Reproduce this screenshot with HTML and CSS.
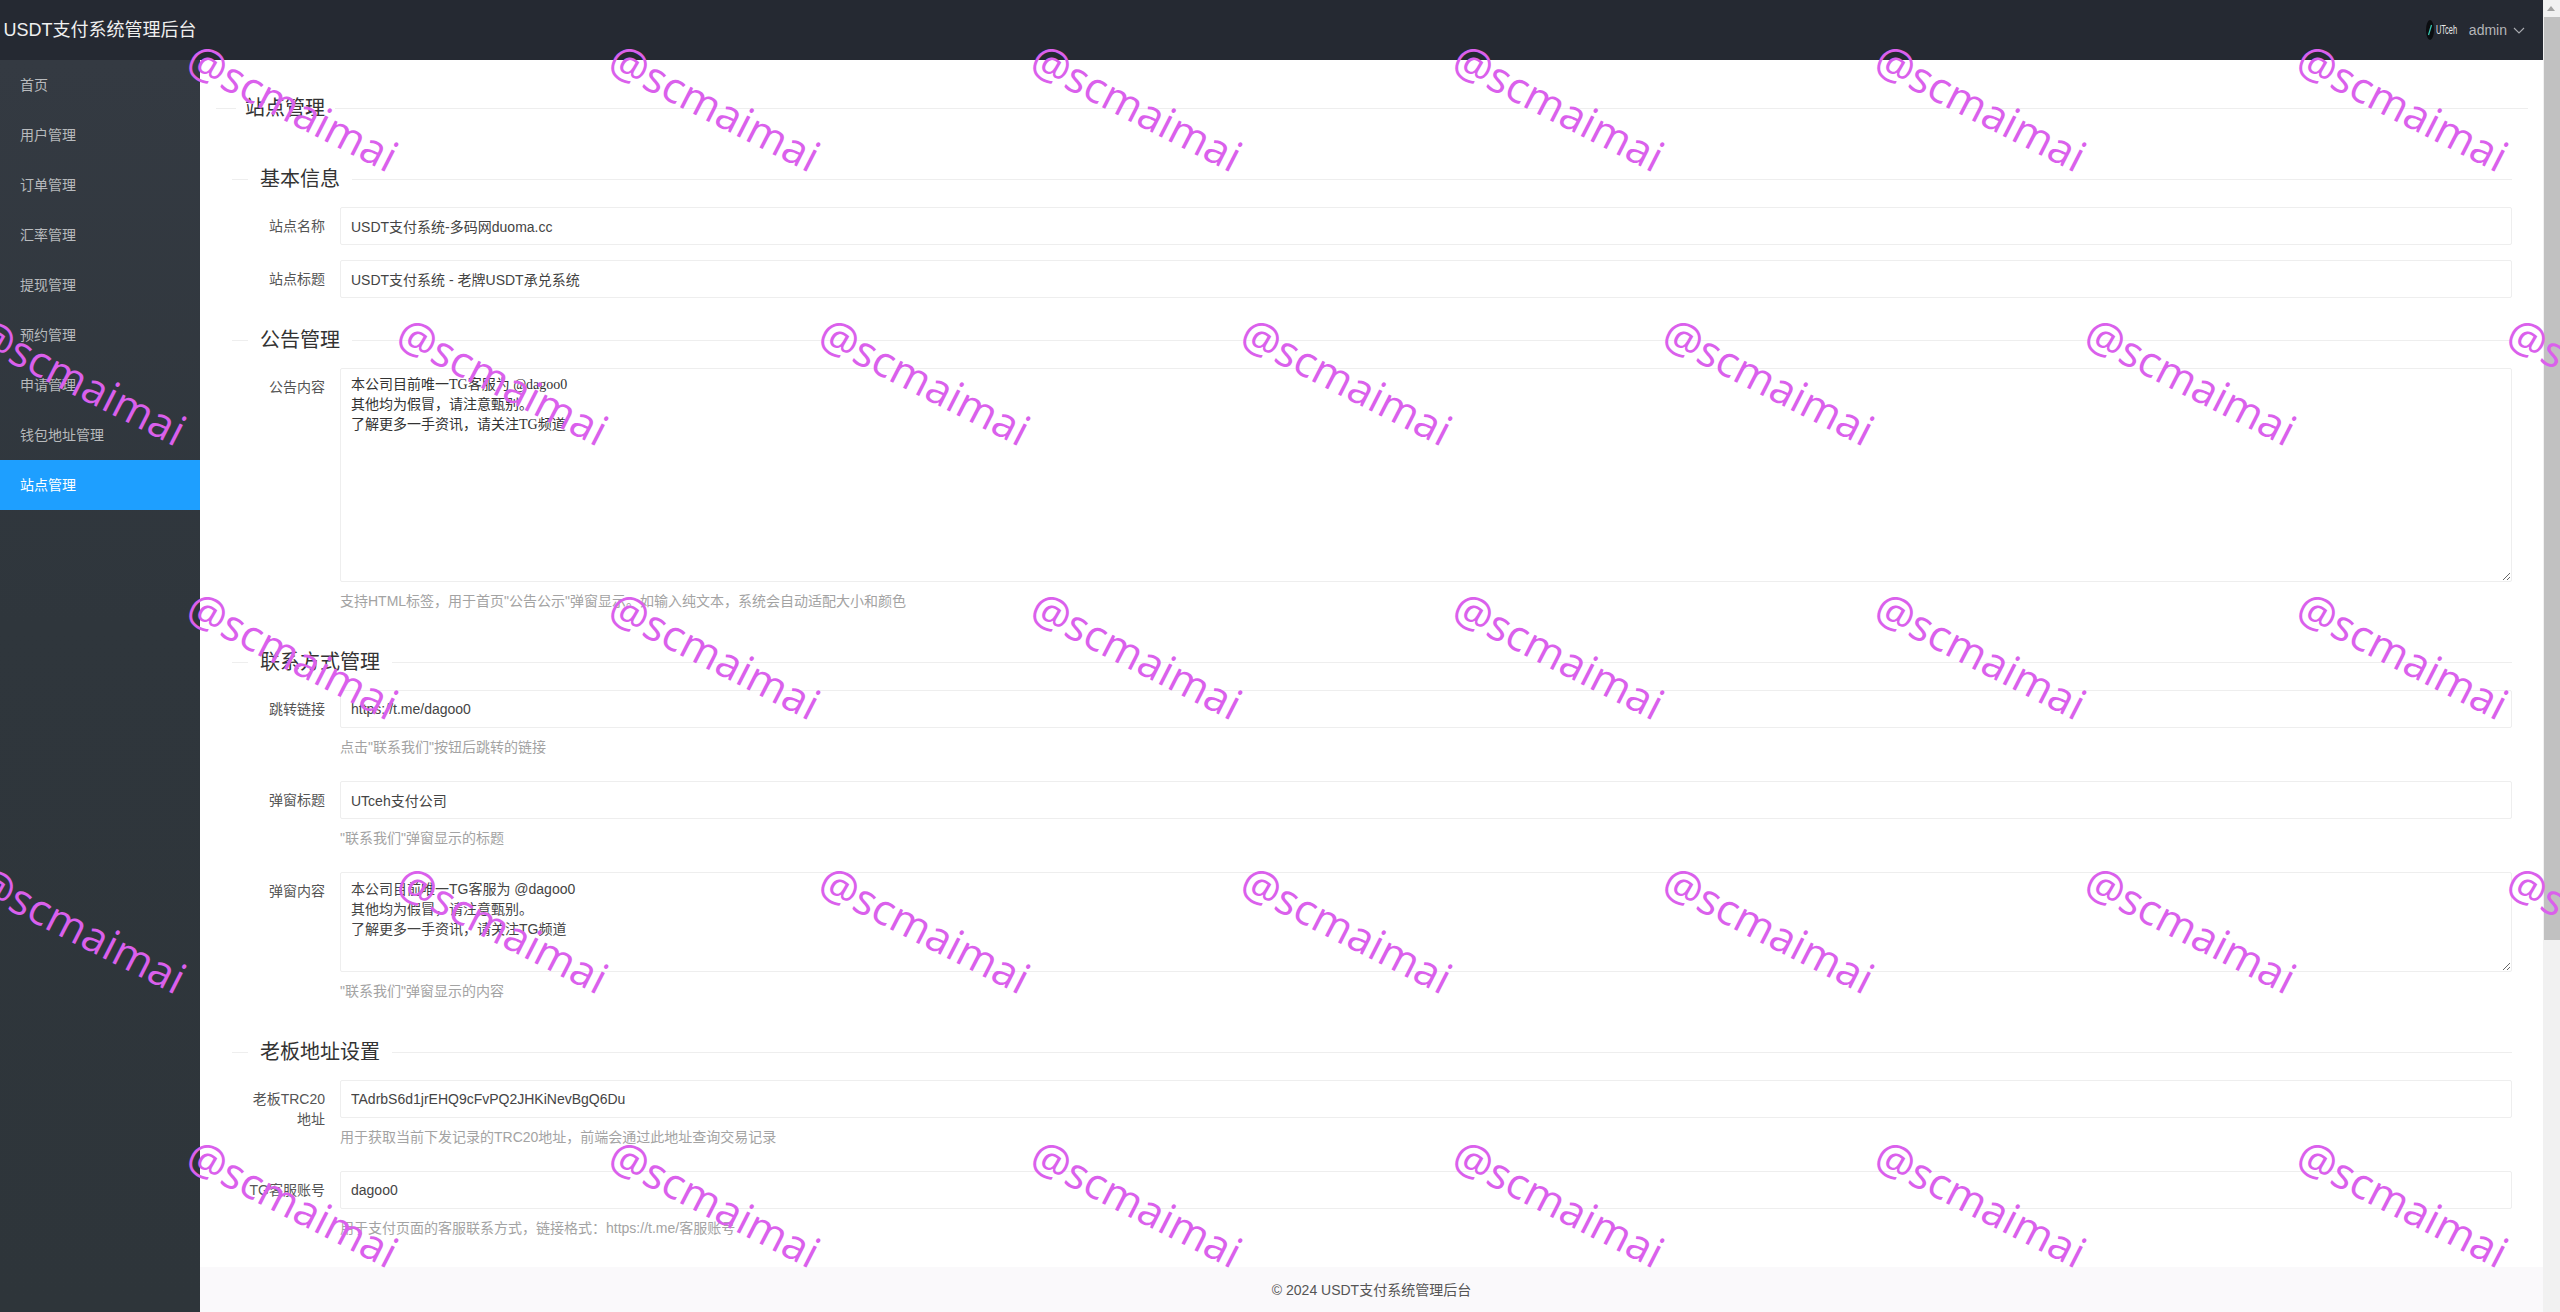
FILE: index.html
```html
<!DOCTYPE html>
<html lang="zh-CN">
<head>
<meta charset="utf-8">
<title>USDT支付系统管理后台</title>
<link rel="stylesheet" href="styles.css">
</head>
<body>
<div class="page">
  <header class="topbar">
    <div class="brand">USDT支付系统管理后台</div>
    <div class="user">
      <span class="avatar">
        <svg class="avatar-mark" viewBox="0 0 8 20" aria-hidden="true"><ellipse cx="4" cy="10" rx="4" ry="10" fill="#0b0d10"/><path d="M5.5 5 2.5 15" stroke="#39c9b4" stroke-width="1.2" fill="none"/></svg>
        <span class="avatar-text">UTceh</span>
      </span>
      <span class="user-name">admin</span>
      <svg class="chevron" viewBox="0 0 12 7" aria-hidden="true"><path d="M1 1l5 5 5-5" fill="none" stroke="#a9abb0" stroke-width="1.1"/></svg>
    </div>
  </header>
  <div class="body">
    <nav class="sidebar">
      <a class="nav-item">首页</a>
      <a class="nav-item">用户管理</a>
      <a class="nav-item">订单管理</a>
      <a class="nav-item">汇率管理</a>
      <a class="nav-item">提现管理</a>
      <a class="nav-item">预约管理</a>
      <a class="nav-item">申请管理</a>
      <a class="nav-item">钱包地址管理</a>
      <a class="nav-item active">站点管理</a>
    </nav>
    <main class="main">
      <div class="content">
        <div class="line-title page-title"><span>站点管理</span></div>
        <form class="form">
          <div class="line-title section-title"><span>基本信息</span></div>
          <div class="form-item">
            <label class="form-label">站点名称</label>
            <div class="form-control"><input class="input" value="USDT支付系统-多码网duoma.cc"></div>
          </div>
          <div class="form-item">
            <label class="form-label">站点标题</label>
            <div class="form-control"><input class="input" value="USDT支付系统 - 老牌USDT承兑系统"></div>
          </div>

          <div class="line-title section-title"><span>公告管理</span></div>
          <div class="form-item">
            <label class="form-label">公告内容</label>
            <div class="form-control">
              <textarea class="textarea textarea-notice">本公司目前唯一TG客服为 @dagoo0
其他均为假冒，请注意甄别。
了解更多一手资讯，请关注TG频道</textarea>
              <div class="hint">支持HTML标签，用于首页"公告公示"弹窗显示。如输入纯文本，系统会自动适配大小和颜色</div>
            </div>
          </div>

          <div class="line-title section-title"><span>联系方式管理</span></div>
          <div class="form-item">
            <label class="form-label">跳转链接</label>
            <div class="form-control">
              <input class="input" value="https://t.me/dagoo0">
              <div class="hint">点击"联系我们"按钮后跳转的链接</div>
            </div>
          </div>
          <div class="form-item">
            <label class="form-label">弹窗标题</label>
            <div class="form-control">
              <input class="input" value="UTceh支付公司">
              <div class="hint">"联系我们"弹窗显示的标题</div>
            </div>
          </div>
          <div class="form-item">
            <label class="form-label">弹窗内容</label>
            <div class="form-control">
              <textarea class="textarea textarea-contact">本公司目前唯一TG客服为 @dagoo0
其他均为假冒，请注意甄别。
了解更多一手资讯，请关注TG频道</textarea>
              <div class="hint">"联系我们"弹窗显示的内容</div>
            </div>
          </div>

          <div class="line-title section-title"><span>老板地址设置</span></div>
          <div class="form-item">
            <label class="form-label">老板TRC20地址</label>
            <div class="form-control">
              <input class="input" value="TAdrbS6d1jrEHQ9cFvPQ2JHKiNevBgQ6Du">
              <div class="hint">用于获取当前下发记录的TRC20地址，前端会通过此地址查询交易记录</div>
            </div>
          </div>
          <div class="form-item">
            <label class="form-label">TG客服账号</label>
            <div class="form-control">
              <input class="input" value="dagoo0">
              <div class="hint">用于支付页面的客服联系方式，链接格式：https://t.me/客服账号</div>
            </div>
          </div>
        </form>
      </div>
      <footer class="footer">© 2024 USDT支付系统管理后台</footer>
    </main>
  </div>
</div>
<div class="scrollbar" aria-hidden="true">
  <span class="scroll-arrow"></span>
  <span class="scroll-thumb"></span>
</div>

<div class="watermarks" aria-hidden="true">
  <div class="wm-row"><span>@scmaimai</span><span>@scmaimai</span><span>@scmaimai</span><span>@scmaimai</span><span>@scmaimai</span><span>@scmaimai</span></div>
  <div class="wm-row wm-shift"><span>@scmaimai</span><span>@scmaimai</span><span>@scmaimai</span><span>@scmaimai</span><span>@scmaimai</span><span>@scmaimai</span><span>@scmaimai</span></div>
  <div class="wm-row"><span>@scmaimai</span><span>@scmaimai</span><span>@scmaimai</span><span>@scmaimai</span><span>@scmaimai</span><span>@scmaimai</span></div>
  <div class="wm-row wm-shift"><span>@scmaimai</span><span>@scmaimai</span><span>@scmaimai</span><span>@scmaimai</span><span>@scmaimai</span><span>@scmaimai</span><span>@scmaimai</span></div>
  <div class="wm-row"><span>@scmaimai</span><span>@scmaimai</span><span>@scmaimai</span><span>@scmaimai</span><span>@scmaimai</span><span>@scmaimai</span></div>
</div>
</body>
</html>
```

FILE: styles.css
```css
* { box-sizing: border-box; }
html, body { height: 100%; }
body {
  margin: 0;
  height: 1312px;
  overflow: hidden;
  display: flex;
  position: relative;
  background: #fff;
  color: #333;
  font: 14px/20px "Liberation Sans", "Noto Sans CJK SC", sans-serif;
}

.page { flex: 1; min-width: 0; display: flex; flex-direction: column; }

/* top bar */
.topbar {
  height: 60px;
  flex: none;
  display: flex;
  align-items: center;
  justify-content: space-between;
  background: #252932;
}
.brand { width: 200px; text-align: center; color: #f0f0f0; font-size: 18px; white-space: nowrap; }
.user { display: flex; align-items: center; padding-right: 18px; color: #b4b5b8; }
.avatar { display: flex; align-items: center; width: 29px; height: 20px; margin-right: 14px; }
.avatar-mark { width: 8px; height: 20px; flex: none; }
.avatar-text {
  color: #e8e8e8;
  font-size: 12px;
  transform: scaleX(.62);
  transform-origin: left center;
  margin-left: 2px;
}
.user-name { font-size: 14px; }
.chevron { width: 12px; height: 7px; margin-left: 6px; }

/* sidebar */
.body { flex: 1; min-height: 0; display: flex; }
.sidebar {
  width: 200px;
  flex: none;
  background: linear-gradient(#343a42, #2f363c 45%, #2e353a);
}
.nav-item {
  display: block;
  height: 50px;
  line-height: 50px;
  padding-left: 20px;
  color: rgba(255, 255, 255, .66);
}
.nav-item.active { background: #1e9fff; color: #fff; }

/* main */
.main { flex: 1; min-width: 0; display: flex; flex-direction: column; }
.content { flex: 1; min-height: 0; overflow: hidden; padding: 34px 15px 0 16px; }
.footer {
  height: 45px;
  flex: none;
  line-height: 47px;
  text-align: center;
  color: #555;
  background: #faf9fb;
}

/* titles with a rule on both sides */
.line-title {
  display: flex;
  align-items: center;
  height: 28px;
  font-size: 20px;
  color: #333;
}
.line-title::before,
.line-title::after {
  content: "";
  border-top: 1px solid #eee;
}
.line-title::after { flex: 1; }
.page-title::before { width: 20px; }
.page-title span { padding: 0 10px 0 9px; }
.form { padding: 43px 16px 0; }
.section-title { margin: 28px 0 14px; }
.form > .section-title:first-child { margin-top: 0; }
.section-title::before { width: 16px; }
.section-title span { padding: 0 12px; }

/* fields */
.form-item { display: grid; grid-template-columns: 108px 1fr; margin-bottom: 15px; }
.form-label { padding: 9px 15px 9px 13px; text-align: right; color: #555; }
.form-control { min-width: 0; }
.input, .textarea {
  display: block;
  width: 100%;
  border: 1px solid #eee;
  border-radius: 2px;
  background: #fff;
  color: #444;
  font: inherit;
  outline: none;
}
.input { height: 38px; padding: 0 10px; }
.textarea { padding: 6px 10px; line-height: 20px; }
.textarea-notice {
  height: 214px;
  font-family: "Liberation Serif", "Noto Sans CJK SC", serif;
  color: #333;
}
.textarea-contact { height: 100px; }
.hint { padding: 9px 0; color: #a3a3a3; white-space: nowrap; }

/* page scrollbar */
.scrollbar {
  width: 17px;
  flex: none;
  display: flex;
  flex-direction: column;
  background: #f1f1f1;
}
.scroll-arrow {
  height: 17px;
  flex: none;
  position: relative;
}
.scroll-arrow::before {
  content: "";
  position: absolute;
  left: 4px;
  top: 6px;
  border: 4px solid transparent;
  border-top: 0;
  border-bottom: 5px solid #a3a3a3;
}
.scroll-thumb { height: 923px; background: #c1c1c1; margin-left: 1px; }

/* watermark layer over the whole window */
.watermarks {
  position: absolute;
  inset: 0;
  overflow: hidden;
  pointer-events: none;
}
.wm-row { display: flex; height: 274px; padding: 31px 0 0 191px; }
.wm-shift { margin-left: -21px; padding-left: 0; }
.wm-row span {
  flex: none;
  width: 422px;
  font: 43px/48px "Open Sans", sans-serif;
  color: #da60ec;
  white-space: nowrap;
  transform: rotate(27deg);
  transform-origin: 0 24px;
}
```
